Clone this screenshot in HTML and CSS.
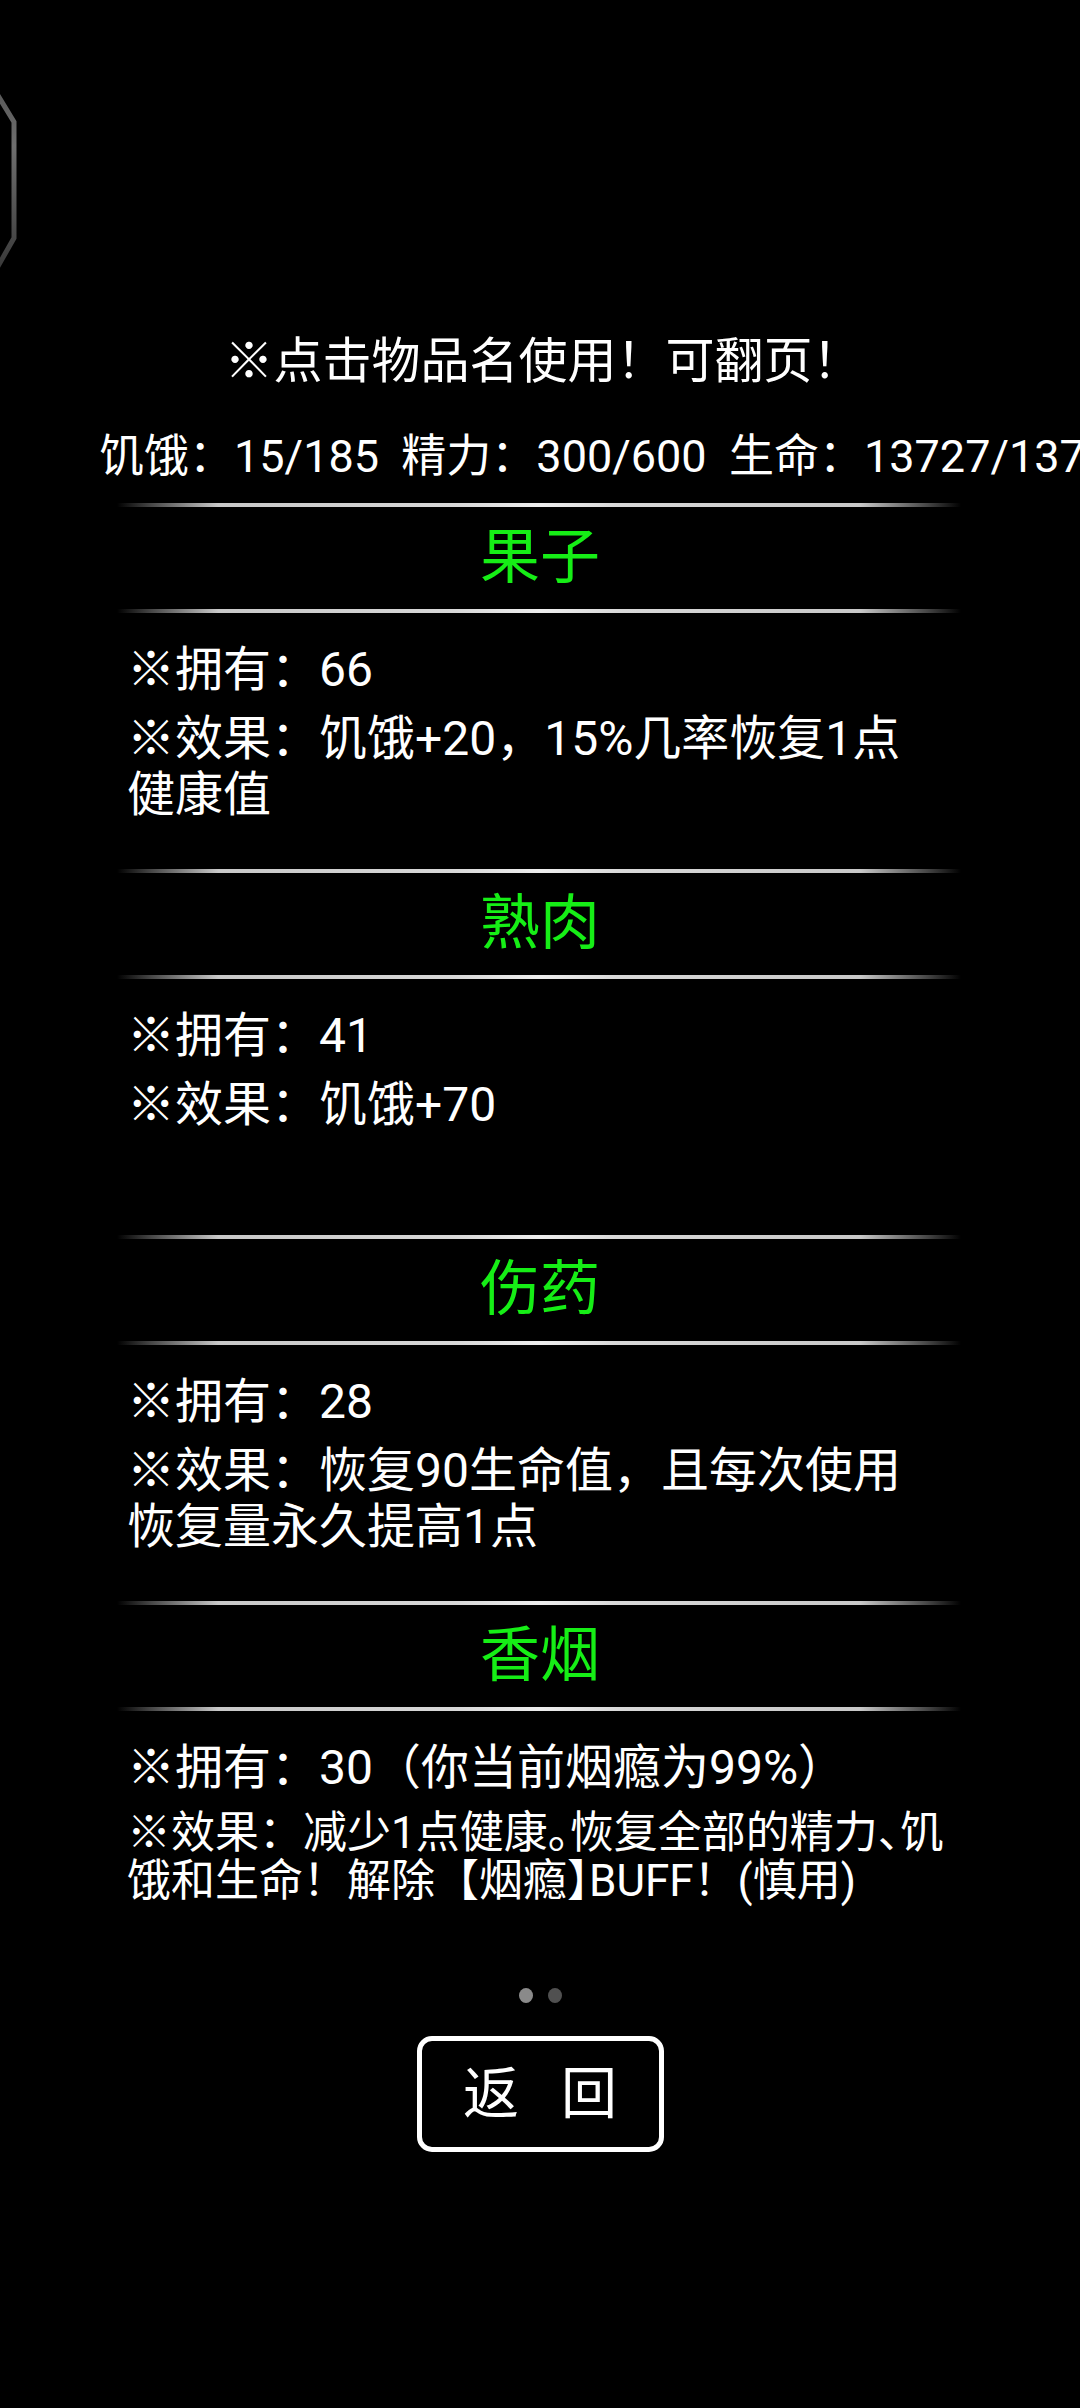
FILE: index.html
```html
<!DOCTYPE html>
<html lang="zh-CN">
<head>
<meta charset="utf-8">
<title>物品</title>
<link rel="stylesheet" href="styles.css">
</head>
<body>
<div class="page">
  <div class="top">
    <svg class="bracket" width="20" height="176" viewBox="0 0 20 176" aria-hidden="true">
      <defs>
        <linearGradient id="bg" x1="0" y1="0" x2="0" y2="1">
          <stop offset="0" stop-color="#5a5a5a"/>
          <stop offset="0.3" stop-color="#6e6e6e"/>
          <stop offset="1" stop-color="#3a3a3a"/>
        </linearGradient>
      </defs>
      <polyline points="-3,2 14,30 14,146 -3,176" fill="none" stroke="url(#bg)" stroke-width="5" stroke-linejoin="miter"/>
    </svg>
  </div>

  <div class="title">※点击物品名使用！可翻页！</div>
  <div class="stats">饥饿：15/185  精力：300/600  生命：13727/13727</div>

  <div class="list">
    <section class="item">
      <div class="divider"></div>
      <div class="name">果子</div>
      <div class="divider"></div>
      <div class="body">
        <p class="line">※拥有：66</p>
        <p class="line">※效果：饥饿+20，15%几率恢复1点<br>健康值</p>
      </div>
    </section>

    <section class="item">
      <div class="divider"></div>
      <div class="name">熟肉</div>
      <div class="divider"></div>
      <div class="body">
        <p class="line">※拥有：41</p>
        <p class="line">※效果：饥饿+70</p>
      </div>
    </section>

    <section class="item">
      <div class="divider"></div>
      <div class="name">伤药</div>
      <div class="divider"></div>
      <div class="body">
        <p class="line">※拥有：28</p>
        <p class="line">※效果：恢复90生命值，且每次使用<br>恢复量永久提高1点</p>
      </div>
    </section>

    <section class="item">
      <div class="divider"></div>
      <div class="name">香烟</div>
      <div class="divider"></div>
      <div class="body">
        <p class="line">※拥有：30（你当前烟瘾为99%）</p>
        <p class="line small">※效果：减少1点健康<span class="half">。</span>恢复全部的精力<span class="half">、</span>饥<br>饿和生命！解除【烟瘾<span class="half">】</span>BUFF！(慎用)</p>
      </div>
    </section>
  </div>

  <div class="dots">
    <span class="dot on"></span>
    <span class="dot"></span>
  </div>

  <div class="actions">
    <button class="back" type="button">返 回</button>
  </div>
</div>
</body>
</html>
```

FILE: styles.css
```css
html, body {
  margin: 0;
  padding: 0;
  background: #000;
}

body {
  width: 1080px;
  height: 2408px;
  overflow: hidden;
  color: #fff;
  font-family: Roboto, "Noto Sans CJK SC", "Noto Sans", sans-serif;
}

.page {
  display: flex;
  flex-direction: column;
  overflow: hidden;
}

.top {
  padding-top: 92px;
  height: 176px;
}

.bracket {
  display: block;
}

.title {
  margin-top: 64px;
  font-size: 49px;
  line-height: 60px;
  height: 60px;
  text-align: center;
  padding-left: 6px;
  white-space: nowrap;
}

.stats {
  margin-top: 37px;
  padding-left: 99px;
  font-size: 45px;
  line-height: 56px;
  height: 56px;
  white-space: pre;
  overflow: hidden;
}

.list {
  margin-top: 18px;
  display: flex;
  flex-direction: column;
}

.item {
  height: 366px;
  display: flex;
  flex-direction: column;
}

.divider {
  width: 844px;
  height: 4px;
  margin-left: 117px;
  background:
    linear-gradient(90deg, rgba(255,255,255,0) 0%, rgba(200,200,200,0.35) 4%, #c8c8c8 12%, #d8d8d8 40%, #ededed 50%, #d8d8d8 60%, #c8c8c8 88%, rgba(200,200,200,0.35) 96%, rgba(255,255,255,0) 100%);
  flex: none;
}

.name {
  height: 102px;
  display: flex;
  align-items: center;
  justify-content: center;
  font-size: 60px;
  line-height: 1;
  color: #16ee16;
  flex: none;
}

.body {
  height: 256px;
  padding: 29px 0 0 127px;
  box-sizing: border-box;
  display: flex;
  flex-direction: column;
  gap: 13px;
  flex: none;
}

.line {
  margin: 0;
  font-size: 48px;
  line-height: 56px;
  white-space: nowrap;
}

.line.small {
  font-size: 44px;
  line-height: 48px;
}

.half {
  font-feature-settings: "halt" 1;
}

.dots {
  margin-top: 21px;
  display: flex;
  justify-content: center;
  gap: 15px;
  height: 15px;
}

.dot {
  width: 14px;
  height: 15px;
  border-radius: 50%;
  background: #505050;
}

.dot.on {
  background: #8a8a8a;
}

.actions {
  margin-top: 33px;
  display: flex;
  justify-content: center;
}

.back {
  width: 247px;
  height: 116px;
  box-sizing: border-box;
  border: 5px solid #fff;
  border-radius: 15px;
  background: #000;
  color: #fff;
  font-family: Roboto, "Noto Sans CJK SC", sans-serif;
  font-size: 56px;
  line-height: 1;
  word-spacing: 28px;
  padding: 0;
  margin-left: 0;
}
```
